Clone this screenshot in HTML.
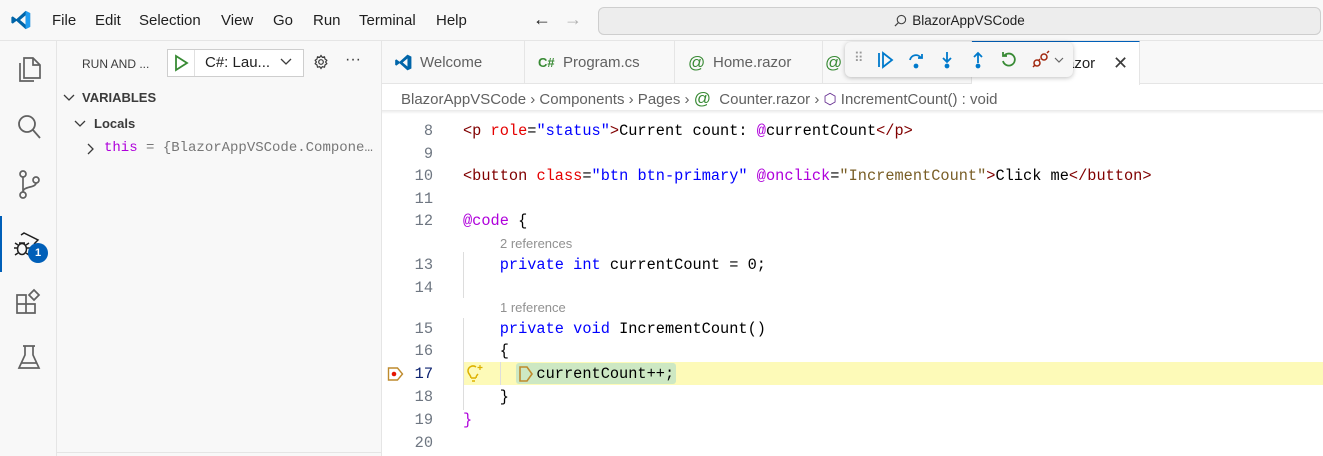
<!DOCTYPE html>
<html><head><meta charset="utf-8"><style>
*{box-sizing:border-box;margin:0;padding:0}
body{width:1323px;height:456px;overflow:hidden;background:#fff;font-family:"Liberation Sans",sans-serif;font-size:13px;color:#3b3b3b;position:relative}
.abs{position:absolute}
.title{left:0;top:0;width:1323px;height:41px;background:#f8f8f8;border-bottom:1px solid #e5e5e5}
.menu span{position:absolute;top:12px;font-size:15px;color:#1f1f1f}
.search{left:598px;top:7px;width:723px;height:28px;background:#ededed;border:1px solid #cecece;border-radius:6px;text-align:center;line-height:26px;font-size:13.5px;color:#1f1f1f}
.act{left:0;top:41px;width:57px;height:415px;background:#f8f8f8;border-right:1px solid #e5e5e5}
.side{left:57px;top:41px;width:325px;height:415px;background:#f8f8f8;border-right:1px solid #e5e5e5}
.tabs{left:382px;top:41px;width:941px;height:43px;background:#f8f8f8;border-bottom:1px solid #e5e5e5}
.tab{position:absolute;top:0;height:43px;border-right:1px solid #e5e5e5;font-size:15px;color:#616161;line-height:43px;padding-left:38px}
.code{font-family:"Liberation Mono",monospace;font-size:15.3px}
.ln{position:absolute;left:382px;width:51px;text-align:right;color:#6e7681;font-family:"Liberation Mono",monospace;font-size:15.3px}
.cl{position:absolute;left:463px;white-space:pre;color:#000}
.lens{position:absolute;left:500px;font-size:13px;color:#919191}
.t{color:#800000}.a{color:#e50000}.s{color:#0000ff}.k{color:#0000ff}.m{color:#af00db}.f{color:#795e26}
</style></head><body>
<div class="abs title">
<svg class="abs" style="left:10px;top:9px" width="22" height="22" viewBox="0 0 24 24"><path d="M17 2 L22 4.5 V19.5 L17 22 L7 13 L3 16 L1.5 15 V9 L3 8 L7 11 Z M17 7 L11 12 L17 17Z" fill="#0065a9"/><path d="M17 2 L22 4.5 V19.5 L17 22Z" fill="#1f9cf0"/></svg>
<div class="menu"><span style="left:52px">File</span><span style="left:95px">Edit</span><span style="left:139px">Selection</span><span style="left:221px">View</span><span style="left:273px">Go</span><span style="left:313px">Run</span><span style="left:359px">Terminal</span><span style="left:436px">Help</span></div>
<span class="abs" style="left:533px;top:9px;font-size:18px;color:#1f1f1f">←</span>
<span class="abs" style="left:564px;top:9px;font-size:18px;color:#b0b0b0">→</span>
<div class="abs search"><svg width="13" height="13" viewBox="0 0 14 14" style="vertical-align:-2px;margin-right:5px"><circle cx="8" cy="6" r="4.5" fill="none" stroke="#444" stroke-width="1.2"/><path d="M4.8 9.2 L1 13" stroke="#444" stroke-width="1.3"/></svg>BlazorAppVSCode</div>
</div>
<div class="abs act">
<svg class="abs" style="left:15px;top:14px" width="28" height="30" viewBox="0 0 28 30" fill="none" stroke="#616161" stroke-width="1.7"><path d="M9 3h9l7 7v13H9z"/><path d="M18 3v7h7"/><path d="M5 8v18h14"/></svg>
<svg class="abs" style="left:15px;top:71px" width="28" height="30" viewBox="0 0 28 30" fill="none" stroke="#616161" stroke-width="1.8"><circle cx="12" cy="12" r="8"/><path d="M18 18l7 8"/></svg>
<svg class="abs" style="left:15px;top:128px" width="28" height="32" viewBox="0 0 28 32" fill="none" stroke="#616161" stroke-width="1.7"><circle cx="8" cy="5" r="3"/><circle cx="8" cy="26" r="3"/><circle cx="21" cy="11" r="3"/><path d="M8 8v15M21 14c0 5-13 3-13 9"/></svg>
<div class="abs" style="left:0;top:175px;width:2px;height:56px;background:#005fb8"></div>
<svg class="abs" style="left:12px;top:190px" width="30" height="30" viewBox="0 0 30 30" fill="none" stroke="#1f1f1f" stroke-width="1.5"><path d="M9 4 L12 2 L26 9 L22 13"/><ellipse cx="10" cy="18" rx="4.5" ry="5.5"/><path d="M2 17h4M14 17h4M3 12l3 2M17 12l-3 2M3 24l3-2M17 24l-3-2M7 12l6 0"/></svg>
<div class="abs" style="left:28px;top:202px;width:20px;height:20px;border-radius:50%;background:#005fb8;color:#fff;font-size:11px;font-weight:bold;text-align:center;line-height:20px">1</div>
<svg class="abs" style="left:15px;top:247px" width="28" height="30" viewBox="0 0 28 30" fill="none" stroke="#616161" stroke-width="1.7"><path d="M2 7h9v9H2zM2 16h9v9H2zM11 16h9v9h-9z"/><path d="M14 7l5-5 5 5-5 5z"/></svg>
<svg class="abs" style="left:15px;top:302px" width="28" height="30" viewBox="0 0 28 30" fill="none" stroke="#616161" stroke-width="1.7"><path d="M8 3h12M10 3v9L4 25h20L18 12V3"/><path d="M6 20h16"/></svg>
</div>
<div class="abs side">
<span class="abs" style="left:25px;top:16px;font-size:12px;color:#3b3b3b">RUN AND ...</span>
<div class="abs" style="left:110px;top:8px;width:137px;height:28px;border:1px solid #cecece;background:#fff"></div>
<svg class="abs" style="left:116px;top:13px" width="16" height="18" viewBox="0 0 16 18"><path d="M3 2 L14 9 L3 16Z" fill="none" stroke="#388a34" stroke-width="1.8"/></svg>
<div class="abs" style="left:137px;top:9px;width:1px;height:26px;background:#e0e0e0"></div>
<span class="abs" style="left:148px;top:13px;font-size:15px;color:#1f1f1f">C#: Lau...</span>
<svg class="abs" style="left:223px;top:16px" width="12" height="10" viewBox="0 0 12 10"><path d="M1 2l5 5 5-5" fill="none" stroke="#3b3b3b" stroke-width="1.3"/></svg>
<svg class="abs" style="left:256px;top:13px" width="16" height="16" viewBox="0 0 16 16" fill="none" stroke="#3b3b3b" stroke-width="1.2"><circle cx="8" cy="8" r="2.3"/><path d="M8 1.5l1.3 1.8 2.2-.5.5 2.2 1.8 1.3-1.2 1.7 1.2 1.7-1.8 1.3-.5 2.2-2.2-.5L8 14.5l-1.3-1.8-2.2.5-.5-2.2-1.8-1.3L3.4 8 2.2 6.3 4 5l.5-2.2 2.2.5z"/></svg>
<span class="abs" style="left:288px;top:10px;font-size:16px;color:#3b3b3b">···</span>
<svg class="abs" style="left:6px;top:52px" width="12" height="10" viewBox="0 0 12 10"><path d="M1 2l5 5 5-5" fill="none" stroke="#3b3b3b" stroke-width="1.3"/></svg>
<span class="abs" style="left:25px;top:49px;font-size:13px;font-weight:bold;color:#3b3b3b">VARIABLES</span>
<svg class="abs" style="left:17px;top:78px" width="12" height="10" viewBox="0 0 12 10"><path d="M1 2l5 5 5-5" fill="none" stroke="#3b3b3b" stroke-width="1.3"/></svg>
<span class="abs" style="left:37px;top:75px;font-size:13px;font-weight:bold;color:#3b3b3b">Locals</span>
<svg class="abs" style="left:29px;top:102px" width="10" height="12" viewBox="0 0 10 12"><path d="M2 1l5 5-5 5" fill="none" stroke="#3b3b3b" stroke-width="1.3"/></svg>
<span class="abs code" style="left:47px;top:99px;font-size:14px;white-space:pre"><span style="color:#af00db">this</span><span style="color:#777"> = {BlazorAppVSCode.Compone…</span></span>
</div>
<div class="abs tabs">
<div class="tab" style="left:0;width:143px"><svg class="abs" style="left:12px;top:12px" width="19" height="19" viewBox="0 0 24 24"><path d="M17 2 L22 4.5 V19.5 L17 22 L7 13 L3 16 L1.5 15 V9 L3 8 L7 11 Z M17 7 L11 12 L17 17Z" fill="#0065a9"/></svg>Welcome</div>
<div class="tab" style="left:143px;width:150px"><span class="abs" style="left:13px;color:#388a34;font-weight:bold;font-size:13px">C#</span>Program.cs</div>
<div class="tab" style="left:293px;width:148px"><span class="abs" style="left:13px;color:#388a34;font-size:17px">@</span>Home.razor</div>
<div class="tab" style="left:441px;width:149px"><span class="abs" style="left:2px;color:#388a34;font-size:17px">@</span></div>
<div class="tab" style="left:590px;width:168px;background:#fff;border-top:1px solid #005fb8;height:44px;color:#1f1f1f;padding-left:89px">razor<span class="abs" style="left:141px;font-size:18px;color:#3b3b3b">✕</span></div>
</div>
<div class="abs" style="left:845px;top:42px;width:228px;height:35px;background:#f6f6f6;border-radius:6px;box-shadow:0 1px 5px rgba(0,0,0,.25)">
<span class="abs" style="left:9px;top:8px;color:#999;font-size:13px;letter-spacing:-1px">⠿</span>
<svg class="abs" style="left:31px;top:9px" width="18" height="18" viewBox="0 0 18 18" fill="none" stroke="#007acc" stroke-width="1.8"><path d="M3 2v14M7 2l9 7-9 7z"/></svg>
<svg class="abs" style="left:62px;top:9px" width="18" height="18" viewBox="0 0 18 18" fill="none" stroke="#007acc" stroke-width="1.8"><path d="M3 9a6 6 0 0 1 11-2M15 3v4h-4"/><circle cx="9" cy="15" r="1.5" fill="#007acc"/></svg>
<svg class="abs" style="left:93px;top:9px" width="18" height="18" viewBox="0 0 18 18" fill="none" stroke="#007acc" stroke-width="1.8"><path d="M9 1v10M5 7l4 4 4-4"/><circle cx="9" cy="15" r="1.5" fill="#007acc"/></svg>
<svg class="abs" style="left:124px;top:9px" width="18" height="18" viewBox="0 0 18 18" fill="none" stroke="#007acc" stroke-width="1.8"><path d="M9 12V2M5 6l4-4 4 4"/><circle cx="9" cy="15" r="1.5" fill="#007acc"/></svg>
<svg class="abs" style="left:155px;top:9px" width="18" height="18" viewBox="0 0 18 18" fill="none" stroke="#388a34" stroke-width="1.8"><path d="M4 5a6 6 0 1 1-1 5M3 1v4h4"/></svg>
<svg class="abs" style="left:186px;top:8px" width="20" height="20" viewBox="0 0 20 20" fill="none" stroke="#a1260d" stroke-width="1.5"><circle cx="6" cy="13" r="3"/><circle cx="13" cy="7" r="3"/><path d="M2 17l2-2M16 3l2-2M9 9l-1 1"/></svg>
<svg class="abs" style="left:209px;top:14px" width="10" height="8" viewBox="0 0 10 8"><path d="M1 2l4 4 4-4" fill="none" stroke="#666" stroke-width="1.2"/></svg>
</div>
<div class="abs" style="left:401px;top:89px;font-size:15px;color:#616161;white-space:pre">BlazorAppVSCode <span>›</span> Components <span>›</span> Pages <span>›</span> <span style="color:#388a34;font-size:17px">@</span>  Counter.razor <span>›</span> <span style="color:#652d90">⬡</span> IncrementCount() : void</div>
<div class="abs" style="left:382px;top:110px;width:941px;height:4px;background:linear-gradient(#e8e8e8,#fff)"></div>
<div class="abs" style="left:463px;top:362px;width:860px;height:23px;background:#fdfab8"></div>
<div class="abs" style="left:516px;top:363px;width:160px;height:21px;background:#cde8c3;border-radius:3px"></div>
<div class="abs" style="left:463px;top:252px;width:1px;height:46px;background:#ddd"></div>
<div class="abs" style="left:463px;top:318px;width:1px;height:92px;background:#ddd"></div>
<div class="abs" style="left:500px;top:362px;width:1px;height:23px;background:#ddd"></div>
<div class="code">
<span class="ln" style="top:122px">8</span><span class="ln" style="top:145px">9</span><span class="ln" style="top:167px">10</span><span class="ln" style="top:190px">11</span><span class="ln" style="top:212px">12</span><span class="ln" style="top:256px">13</span><span class="ln" style="top:279px">14</span><span class="ln" style="top:320px">15</span><span class="ln" style="top:342px">16</span><span class="ln" style="top:365px;color:#0b216f">17</span><span class="ln" style="top:388px">18</span><span class="ln" style="top:411px">19</span><span class="ln" style="top:434px">20</span>
<span class="cl" style="top:122px"><span class="t">&lt;p</span> <span class="a">role</span>=<span class="s">"status"</span><span class="t">&gt;</span>Current count: <span class="m">@</span>currentCount<span class="t">&lt;/p&gt;</span></span>
<span class="cl" style="top:167px"><span class="t">&lt;button</span> <span class="a">class</span>=<span class="s">"btn btn-primary"</span> <span class="m">@onclick</span>=<span class="f">"IncrementCount"</span><span class="t">&gt;</span>Click me<span class="t">&lt;/button&gt;</span></span>
<span class="cl" style="top:212px"><span class="m">@code</span> {</span>
<span class="cl" style="top:256px">    <span class="k">private</span> <span class="k">int</span> currentCount = 0;</span>
<span class="cl" style="top:320px">    <span class="k">private</span> <span class="k">void</span> IncrementCount()</span>
<span class="cl" style="top:342px">    {</span>
<span class="cl" style="top:365px">        currentCount++;</span>
<span class="cl" style="top:388px">    }</span>
<span class="cl" style="top:411px"><span class="m">}</span></span>
</div>
<span class="lens" style="top:236px">2 references</span>
<span class="lens" style="top:300px">1 reference</span>
<svg class="abs" style="left:518px;top:365px" width="16" height="18" viewBox="0 0 16 18"><path d="M2 2h7l5 7-5 7H2z" fill="none" stroke="#be8a2d" stroke-width="1.6"/></svg>
<svg class="abs" style="left:387px;top:366px" width="17" height="16" viewBox="0 0 17 16"><path d="M1.5 2h9l5 6-5 6h-9z" fill="#fff" stroke="#be8a2d" stroke-width="1.4"/><circle cx="7" cy="8" r="2.3" fill="#e51400"/></svg>
<svg class="abs" style="left:466px;top:364px" width="18" height="19" viewBox="0 0 18 19" fill="none" stroke="#ddb100" stroke-width="1.5"><path d="M5 14c0-3-3-4-3-7a5 5 0 0 1 8-4M5 14h5M6 17h3M10 14c0-2 1-3 2-4"/><path d="M14 1v5M11.5 3.5h5" stroke-width="1.2"/></svg>
<div class="abs" style="left:57px;top:452px;width:325px;height:1px;background:#e5e5e5"></div>
</body></html>
